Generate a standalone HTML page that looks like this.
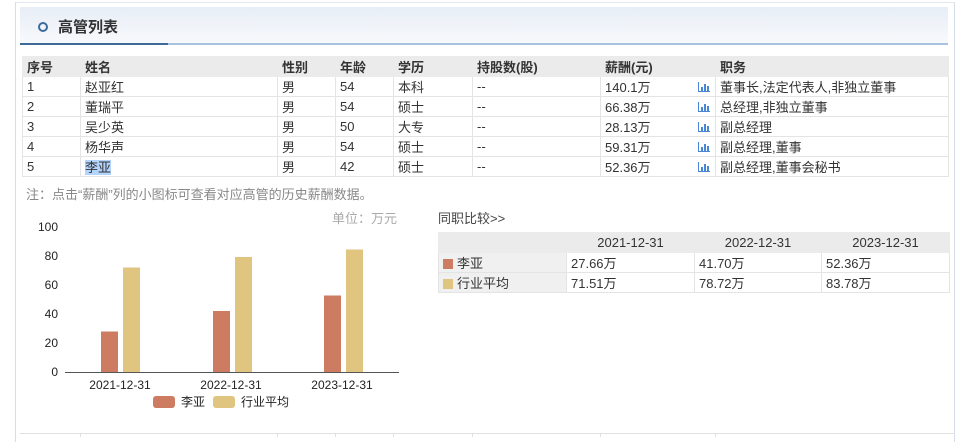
<!DOCTYPE html>
<html><head><meta charset="utf-8"><style>
*{margin:0;padding:0;box-sizing:border-box}
body{width:960px;height:436px;background:#fff;font-family:"Liberation Sans","Noto Sans CJK SC",sans-serif;font-size:13px;color:#333;position:relative;overflow:hidden}
.abs{position:absolute}
.frame{left:15px;top:2px;width:940px;height:440px;border-left:1px solid #d5dde8;border-right:1px solid #d5dde8;border-top:1px solid #e3e8ef}
.hdr{left:20px;top:7px;width:928px;height:38px;background:linear-gradient(#e8eef6,#f7f9fc);border-bottom:2px solid #a9c3de}
.hdr .dk{position:absolute;left:0;bottom:-2px;width:148px;height:2px;background:#3e6a98}
.hdr .ci{position:absolute;left:18px;top:15px;width:10px;height:10px;border:2px solid #3c6b9c;border-radius:50%}
.hdr .t{position:absolute;left:38px;top:9px;font-size:15px;font-weight:bold;color:#333}
table{border-collapse:collapse;position:absolute;table-layout:fixed}
td{height:20px;border:1px solid #e4e4e4;padding:0 4px;white-space:nowrap;font-size:13px;overflow:hidden}
tr.h td{background:#ebebeb;font-weight:bold;border-color:#ebebeb}
.ico{display:inline-block;width:12px;height:10px;position:relative;vertical-align:-1px}
.ico i{position:absolute;bottom:0;width:2px;background:#4a86d8}
.sw{display:inline-block;width:10px;height:10px;margin:0 4px 0 2px;vertical-align:-1px}
</style></head><body>
<div class="abs frame"></div>
<div class="abs hdr"><div class="dk"></div><div class="ci"></div><div class="t">高管列表</div></div>

<table style="left:22px;top:56px;width:926px">
<colgroup><col style="width:58px"><col style="width:197px"><col style="width:58px"><col style="width:58px"><col style="width:79px"><col style="width:128px"><col style="width:90px"><col style="width:25px"><col style="width:233px"></colgroup>
<tr class="h"><td>序号</td><td>姓名</td><td>性别</td><td>年龄</td><td>学历</td><td>持股数(股)</td><td style="border-right:none">薪酬(元)</td><td style="border-left:none"></td><td>职务</td></tr>
<tr><td>1</td><td>赵亚红</td><td>男</td><td>54</td><td>本科</td><td>--</td><td style="border-right:none">140.1万</td><td style="border-left:none;padding:0 3px 0 7px"><span class="ico"><i style="left:0;height:10px;width:1px"></i><i style="left:3px;height:5px"></i><i style="left:6px;height:8px"></i><i style="left:9px;height:6px"></i><i style="left:0;width:12px;height:1px"></i></span></td><td>董事长,法定代表人,非独立董事</td></tr>
<tr><td>2</td><td>董瑞平</td><td>男</td><td>54</td><td>硕士</td><td>--</td><td style="border-right:none">66.38万</td><td style="border-left:none;padding:0 3px 0 7px"><span class="ico"><i style="left:0;height:10px;width:1px"></i><i style="left:3px;height:5px"></i><i style="left:6px;height:8px"></i><i style="left:9px;height:6px"></i><i style="left:0;width:12px;height:1px"></i></span></td><td>总经理,非独立董事</td></tr>
<tr><td>3</td><td>吴少英</td><td>男</td><td>50</td><td>大专</td><td>--</td><td style="border-right:none">28.13万</td><td style="border-left:none;padding:0 3px 0 7px"><span class="ico"><i style="left:0;height:10px;width:1px"></i><i style="left:3px;height:5px"></i><i style="left:6px;height:8px"></i><i style="left:9px;height:6px"></i><i style="left:0;width:12px;height:1px"></i></span></td><td>副总经理</td></tr>
<tr><td>4</td><td>杨华声</td><td>男</td><td>54</td><td>硕士</td><td>--</td><td style="border-right:none">59.31万</td><td style="border-left:none;padding:0 3px 0 7px"><span class="ico"><i style="left:0;height:10px;width:1px"></i><i style="left:3px;height:5px"></i><i style="left:6px;height:8px"></i><i style="left:9px;height:6px"></i><i style="left:0;width:12px;height:1px"></i></span></td><td>副总经理,董事</td></tr>
<tr><td>5</td><td><span style="background:#b3d4fc">李亚</span></td><td>男</td><td>42</td><td>硕士</td><td>--</td><td style="border-right:none">52.36万</td><td style="border-left:none;padding:0 3px 0 7px"><span class="ico"><i style="left:0;height:10px;width:1px"></i><i style="left:3px;height:5px"></i><i style="left:6px;height:8px"></i><i style="left:9px;height:6px"></i><i style="left:0;width:12px;height:1px"></i></span></td><td>副总经理,董事会秘书</td></tr>
</table>

<div class="abs" style="left:26px;top:184px;color:#888;font-size:13px">注：点击“薪酬”列的小图标可查看对应高管的历史薪酬数据。</div>

<svg class="abs" style="left:0;top:200px" width="430" height="230" font-family="Liberation Sans, Noto Sans CJK SC, sans-serif">
<text x="397" y="23" font-size="13" fill="#aaa" text-anchor="end">单位：万元</text>
<g font-size="12" fill="#222" text-anchor="end">
<text x="58" y="31">100</text><text x="58" y="60">80</text><text x="58" y="89">60</text><text x="58" y="118">40</text><text x="58" y="147">20</text><text x="58" y="176">0</text></g>
<rect x="101" y="131.5" width="17" height="40.5" fill="#cd7b61"/>
<rect x="123" y="67.5" width="17" height="104.5" fill="#e0c580"/>
<rect x="213" y="111" width="17" height="61" fill="#cd7b61"/>
<rect x="235" y="57" width="17" height="115" fill="#e0c580"/>
<rect x="324" y="95.5" width="17" height="76.5" fill="#cd7b61"/>
<rect x="346" y="49.5" width="17" height="122.5" fill="#e0c580"/>
<line x1="65" y1="172.5" x2="399" y2="172.5" stroke="#555" stroke-width="1"/>
<g font-size="12" fill="#222" text-anchor="middle">
<text x="120" y="189">2021-12-31</text><text x="231" y="189">2022-12-31</text><text x="342" y="189">2023-12-31</text></g>
<rect x="153" y="196" width="22" height="12" rx="3" fill="#cd7b61"/>
<text x="181" y="206" font-size="12" fill="#222">李亚</text>
<rect x="213" y="196" width="22" height="12" rx="3" fill="#e0c580"/>
<text x="241" y="206" font-size="12" fill="#222">行业平均</text>
</svg>

<div class="abs" style="left:438px;top:208px;font-size:13px;color:#444">同职比较&gt;&gt;</div>
<table style="left:438px;top:232px;width:511px">
<colgroup><col style="width:128px"><col style="width:128px"><col style="width:127px"><col style="width:128px"></colgroup>
<tr class="h"><td style="font-weight:normal"></td><td style="text-align:center;font-weight:normal">2021-12-31</td><td style="text-align:center;font-weight:normal">2022-12-31</td><td style="text-align:center;font-weight:normal">2023-12-31</td></tr>
<tr><td style="background:#f0f0f0;padding:0 2px"><span class="sw" style="background:#cd7b61"></span>李亚</td><td>27.66万</td><td>41.70万</td><td>52.36万</td></tr>
<tr><td style="background:#f0f0f0;padding:0 2px"><span class="sw" style="background:#e0c580"></span>行业平均</td><td>71.51万</td><td>78.72万</td><td>83.78万</td></tr>
</table>

<div class="abs" style="left:20px;top:433px;width:935px;border-top:1px solid #e0e0e0;height:4px"></div>
<div class="abs" style="left:80px;top:433px;width:1px;height:4px;background:#e0e0e0"></div>
<div class="abs" style="left:277px;top:433px;width:1px;height:4px;background:#e0e0e0"></div>
<div class="abs" style="left:335px;top:433px;width:1px;height:4px;background:#e0e0e0"></div>
<div class="abs" style="left:393px;top:433px;width:1px;height:4px;background:#e0e0e0"></div>
<div class="abs" style="left:472px;top:433px;width:1px;height:4px;background:#e0e0e0"></div>
<div class="abs" style="left:600px;top:433px;width:1px;height:4px;background:#e0e0e0"></div>
<div class="abs" style="left:715px;top:433px;width:1px;height:4px;background:#e0e0e0"></div>
</body></html>
